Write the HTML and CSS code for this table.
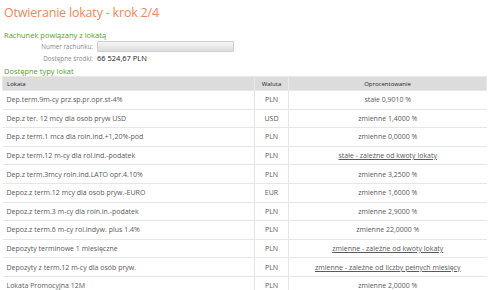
FILE: index.html
```html
<!DOCTYPE html>
<html>
<head>
<meta charset="utf-8">
<link rel="stylesheet" href="styles.css">
</head>
<body>
<div class="page">
  <h1 class="title">Otwieranie lokaty - krok 2/4</h1>
  <div class="section">Rachunek powiązany z lokatą</div>
  <div class="form">
    <div class="frow"><span class="lbl">Numer rachunku:</span><span class="inp"></span></div>
    <div class="frow"><span class="lbl">Dostępne środki:</span><span class="val">66 524,67 PLN</span></div>
  </div>
  <div class="section sec2">Dostępne typy lokat</div>
  <table class="tbl">
    <thead>
      <tr><th class="c1">Lokata</th><th class="c2">Waluta</th><th class="c3">Oprocentowanie</th></tr>
    </thead>
    <tbody>
      <tr><td class="c1">Dep.term.9m-cy prz.sp.pr.opr.st-4%</td><td class="c2">PLN</td><td class="c3">stałe 0,9010 %</td></tr>
      <tr><td class="c1">Dep.z ter. 12 mcy dla osob pryw USD</td><td class="c2">USD</td><td class="c3">zmienne 1,4000 %</td></tr>
      <tr><td class="c1">Dep.z term.1 mca dla roln.ind.+1,20%-pod</td><td class="c2">PLN</td><td class="c3">zmienne 0,0000 %</td></tr>
      <tr><td class="c1">Dep.z term.12 m-cy dla rol.ind.-podatek</td><td class="c2">PLN</td><td class="c3"><a class="lnk">stałe - zależne od kwoty lokaty</a></td></tr>
      <tr><td class="c1">Dep.z term.3mcy roln.ind.LATO opr.4.10%</td><td class="c2">PLN</td><td class="c3">zmienne 3,2500 %</td></tr>
      <tr><td class="c1">Depoz.z term.12 mcy dla osob pryw.-EURO</td><td class="c2">EUR</td><td class="c3">zmienne 1,6000 %</td></tr>
      <tr><td class="c1">Depoz.z term.3 m-cy dla roln.in.-podatek</td><td class="c2">PLN</td><td class="c3">zmienne 2,9000 %</td></tr>
      <tr><td class="c1">Depoz.z term.6 m-cy rol.indyw. plus 1.4%</td><td class="c2">PLN</td><td class="c3">zmienne 22,0000 %</td></tr>
      <tr><td class="c1">Depozyty terminowe 1 miesięczne</td><td class="c2">PLN</td><td class="c3"><a class="lnk">zmienne - zależne od kwoty lokaty</a></td></tr>
      <tr><td class="c1">Depozyty z term.12 m-cy dla osób pryw.</td><td class="c2">PLN</td><td class="c3"><a class="lnk">zmienne - zależne od liczby pełnych miesięcy</a></td></tr>
      <tr><td class="c1">Lokata Promocyjna 12M</td><td class="c2">PLN</td><td class="c3">zmienne 2,0000 %</td></tr>
    </tbody>
  </table>
</div>
</body>
</html>
```
FILE: styles.css
```css
html, body {
  margin: 0;
  padding: 0;
  background: #ffffff;
}
body {
  font-family: "Open Sans", "Noto Sans", sans-serif;
  font-size: 7px;
  color: #333333;
}
.page {
  padding: 5px 2px 0 2px;
}
.title {
  margin: 0 0 0 2px;
  font-size: 12.5px;
  font-weight: normal;
  color: #f2875a;
  line-height: 16px;
  letter-spacing: -0.2px;
}
.section {
  margin: 9px 0 0 2px;
  font-size: 7.5px;
  color: #55a02c;
  line-height: 10px;
}
.sec2 {
  margin-top: 2px;
}
.form {
  display: flex;
  flex-direction: column;
}
.frow {
  display: flex;
  align-items: center;
  height: 12px;
}
.lbl {
  width: 91px;
  text-align: right;
  color: #8a8a8a;
  font-size: 6.3px;
  padding-right: 4px;
}
.inp {
  width: 135px;
  height: 9px;
  border: 1px solid #cfcfcf;
  border-radius: 1px;
  background: linear-gradient(#f6f6f6, #dcdcdc);
}
.val {
  color: #222;
  font-size: 7.5px;
}
.tbl {
  width: 485px;
  border-collapse: collapse;
  margin-top: 0;
}
.tbl th {
  background: #dcdcdc;
  font-weight: normal;
  color: #222;
  font-size: 6px;
  height: 13px;
  padding: 0 4px;
  border: 1px solid #e8e8e8;
}
.tbl td {
  height: 17.6px;
  padding: 0 4px;
  border-top: 1px solid #e6e6e6;
  border-bottom: 1px solid #e6e6e6;
  color: #5a5a5a;
}
.tbl td.c2 {
  border-left: 1px solid #e6e6e6;
  border-right: 1px solid #e6e6e6;
}
.c1 { text-align: left; width: 243px; }
.c2 { text-align: center; width: 25px; }
.c3 { text-align: center; }
.tbl th.c1 { text-align: left; }
.lnk {
  color: #5a5a5a;
  text-decoration: underline;
}
```
